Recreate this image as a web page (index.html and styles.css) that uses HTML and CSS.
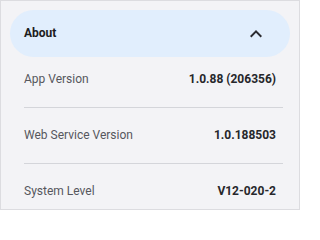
FILE: index.html
```html
<!DOCTYPE html>
<html>
<head>
<meta charset="utf-8">
<link rel="stylesheet" href="styles.css">
</head>
<body>
<div class="panel">
  <div class="header">
    <span class="title">About</span>
    <svg class="chev" width="24" height="24" viewBox="0 0 24 24"><path d="M12 8l-6 6 1.41 1.41L12 10.83l4.59 4.58L18 14z" fill="#2b2b30"/></svg>
  </div>
  <div class="list">
    <div class="row"><span class="label">App Version</span><span class="value">1.0.88 (206356)</span></div>
    <div class="row"><span class="label">Web Service Version</span><span class="value">1.0.188503</span></div>
    <div class="row last"><span class="label">System Level</span><span class="value">V12-020-2</span></div>
  </div>
</div>
</body>
</html>
```
FILE: styles.css
```css
html, body { margin: 0; padding: 0; }
* { box-sizing: border-box; }
body { font-family: Roboto, "Liberation Sans", sans-serif; background: #ffffff; }
.panel {
  width: 300px;
  height: 210px;
  overflow: hidden;
  border: 1px solid #dcdce0;
  background: #f3f3f6;
  padding: 9px 9px 0 9px;
}
.header {
  height: 47px;
  border-radius: 24px;
  background: #e1eefd;
  display: flex;
  align-items: center;
  justify-content: space-between;
  padding: 0 22px 0 14px;
}
.title { font-size: 12px; font-weight: 700; color: #1c1c20; line-height: 15px; }
.chev { display: block; }
.list { margin: 0 7px 0 14px; }
.row {
  display: flex;
  justify-content: space-between;
  align-items: center;
  padding: 20px 7px 20px 0;
  line-height: 15px;
  font-size: 12px;
  border-bottom: 1px solid #d4d5da;
}
.row:first-child { padding-top: 15px; }
.row.last { border-bottom: none; }
.label { color: #56575d; }
.value { color: #26272b; font-weight: 700; }
```
